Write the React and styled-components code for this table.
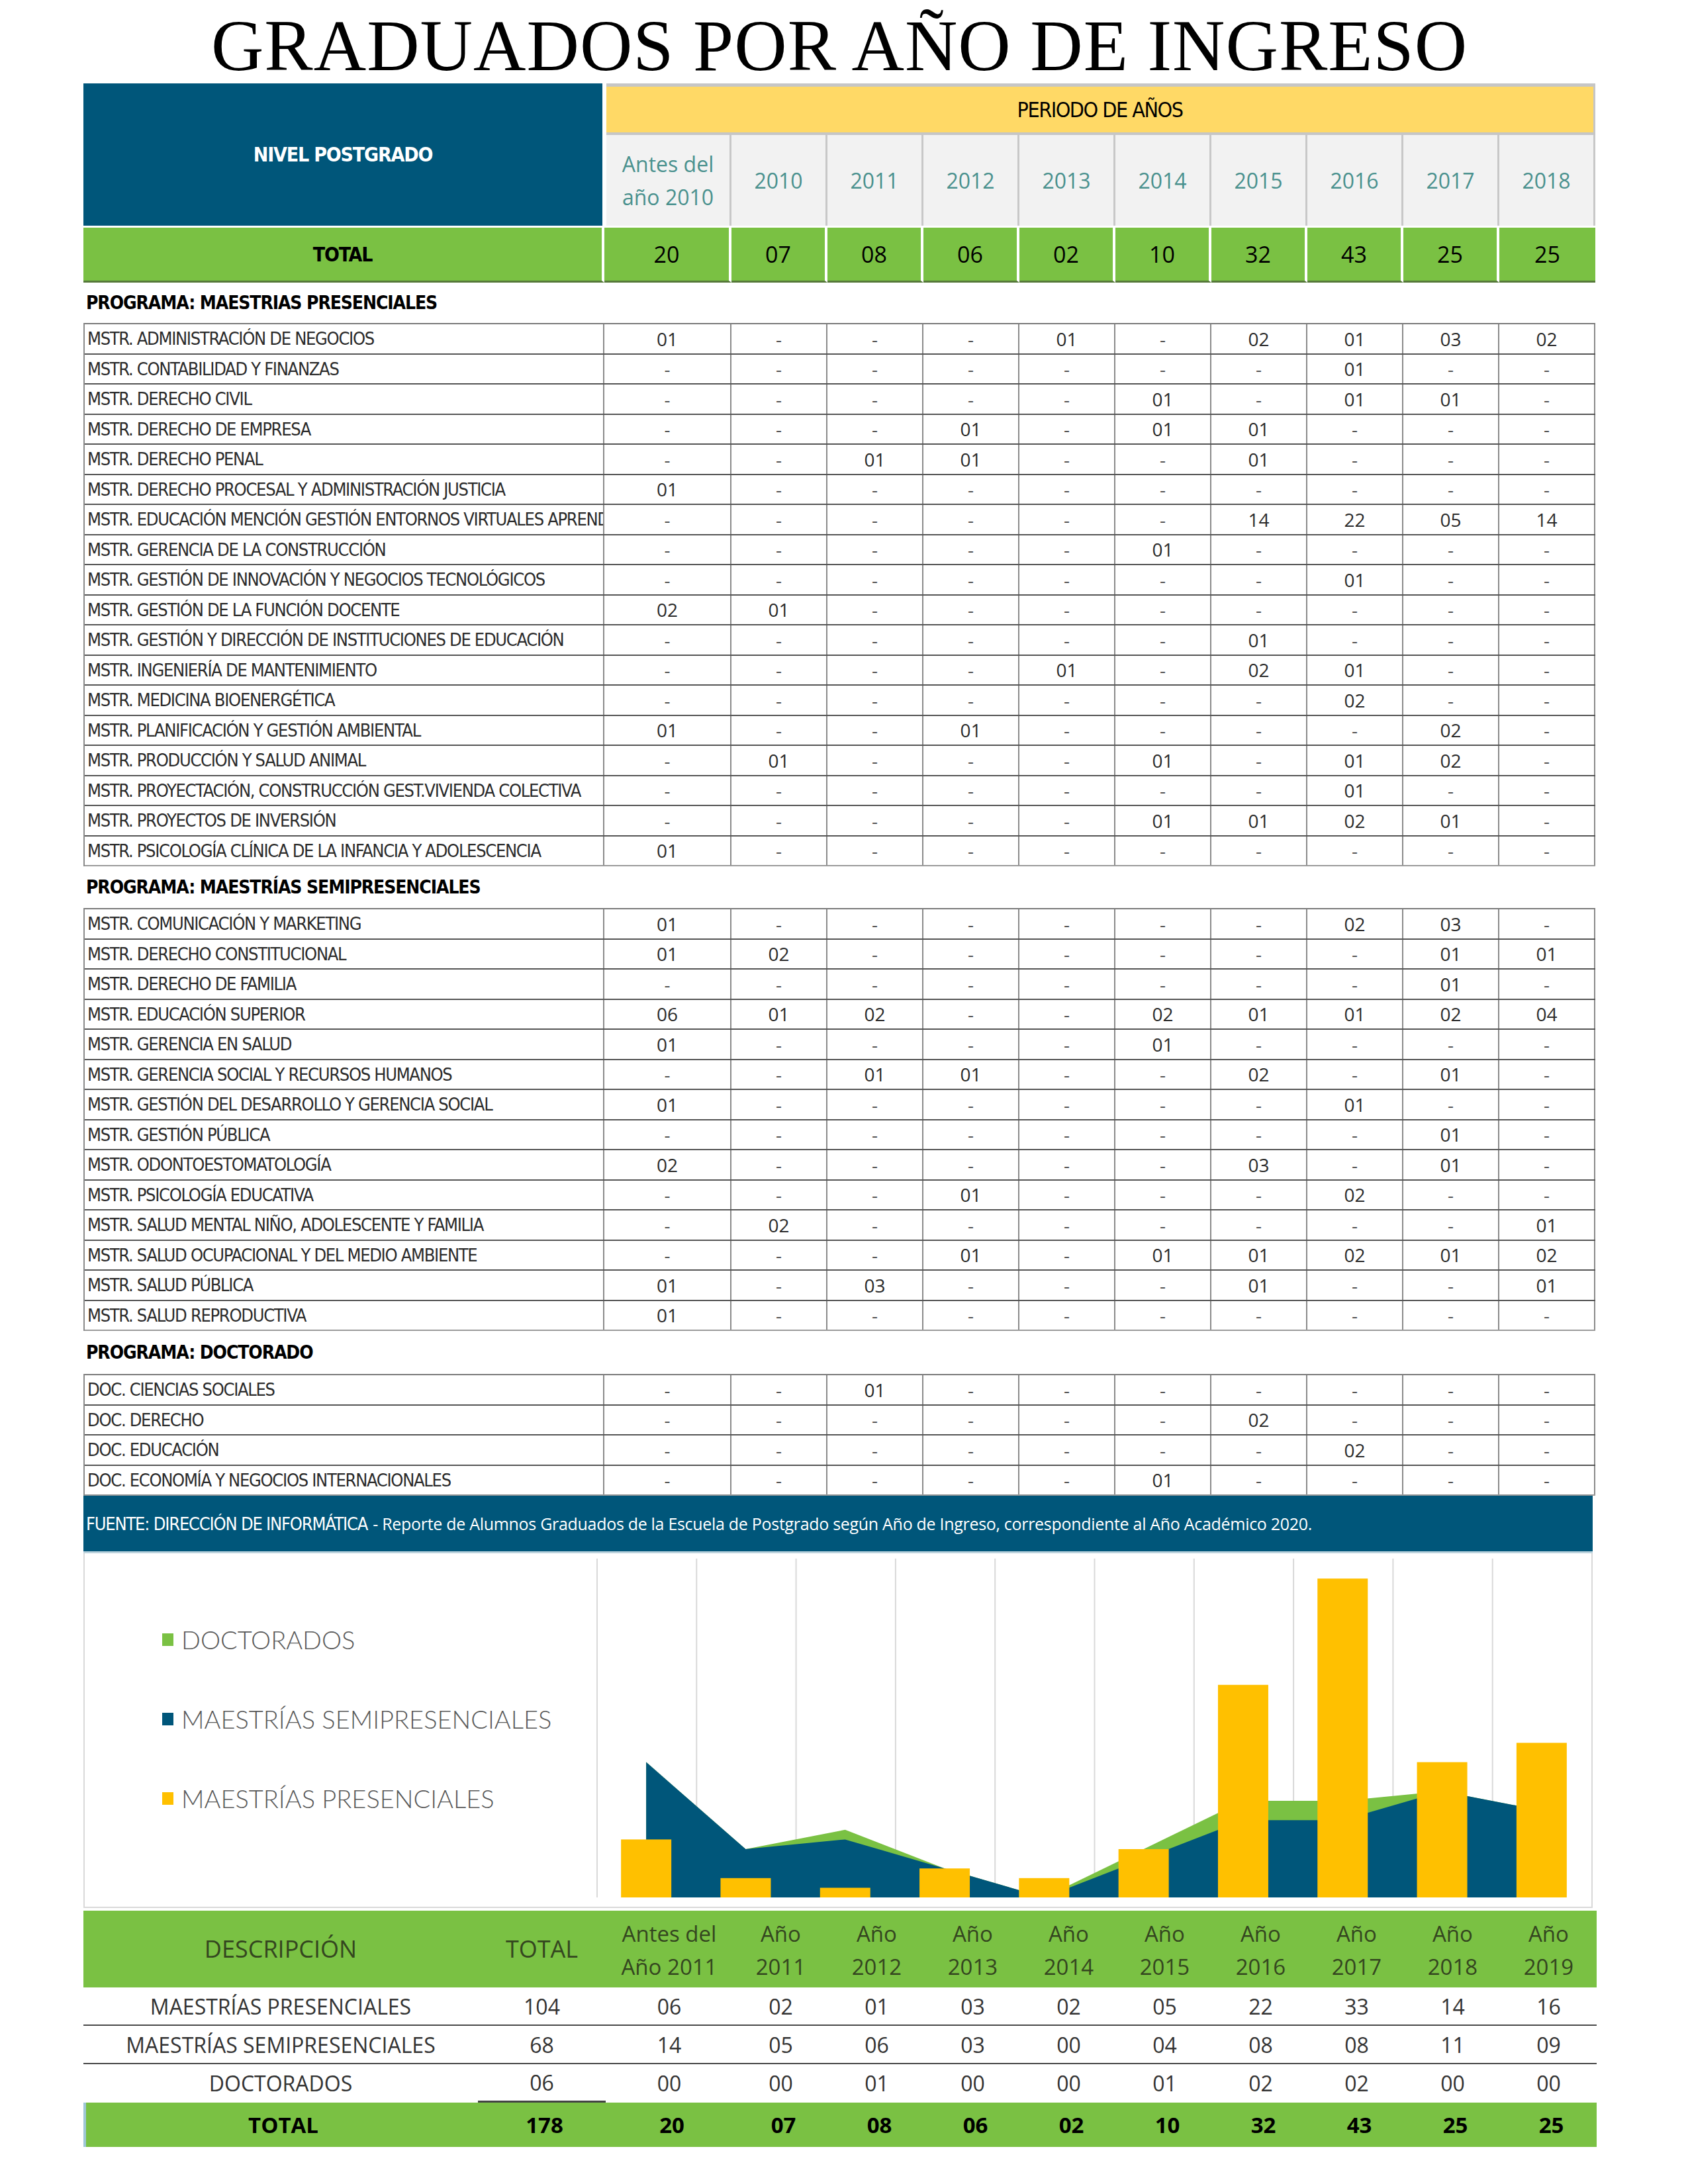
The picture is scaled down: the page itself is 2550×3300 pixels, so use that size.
import React from 'react';
import styled, { createGlobalStyle } from 'styled-components';

const COLS = '787px 192px repeat(9, 145px)';
const SUM_COLS = '596px 193px 192px repeat(9, 145px)';
const NARROW = '"DejaVu Sans Condensed", "Liberation Sans", sans-serif';
const BODY = '"Open Sans", "Liberation Sans", sans-serif';

const teal = '#00567a';
const green = '#7ac143';
const yellow = '#ffd966';
const gold = '#ffc000';

const GlobalStyle = createGlobalStyle`
  body {
    margin: 0;
    background: #fff;
    font-family: ${BODY};
  }
`;

const Page = styled.div`
  width: 2550px;
  padding-left: 126px;
  box-sizing: border-box;
`;

const Title = styled.h1`
  margin: 0;
  height: 126px;
  padding-top: 14px;
  box-sizing: border-box;
  font-family: "Liberation Serif", serif;
  font-weight: 400;
  font-size: 110px;
  line-height: 110px;
  text-align: center;
  width: 2284px;
  color: #000;
  letter-spacing: 1px;
  white-space: nowrap;
`;

const HeadTop = styled.div`
  display: grid;
  grid-template-columns: 787px 1fr;
  width: 2284px;
  height: 215px;
`;

const Nivel = styled.div`
  background: ${teal};
  color: #fff;
  display: flex;
  align-items: center;
  justify-content: center;
  font-family: ${NARROW};
  font-weight: 700;
  font-size: 30px;
  letter-spacing: -1.2px;
  margin-right: 3px;
`;

const PeriodCol = styled.div`
  display: flex;
  flex-direction: column;
  padding-left: 3px;
`;

const PeriodBand = styled.div`
  height: 78px;
  box-sizing: border-box;
  background: ${yellow};
  border-top: 5px solid #c6c6c6;
  border-bottom: 4px solid #c6c6c6;
  border-right: 3px solid #c6c6c6;
  display: flex;
  align-items: center;
  justify-content: center;
  font-family: ${NARROW};
  font-size: 32px;
  letter-spacing: -1.5px;
  color: #000;
`;

const YearRow = styled.div`
  flex: 1;
  display: grid;
  grid-template-columns: 189px repeat(9, 145px);
  background: #f2f2f2;
`;

const YearCell = styled.div`
  display: flex;
  align-items: center;
  justify-content: center;
  text-align: center;
  color: #4a918e;
  font-size: 32px;
  line-height: 50px;
  border-right: 3px solid #c8c8c8;
`;

const TotalRow = styled.div`
  display: grid;
  grid-template-columns: ${COLS};
  width: 2284px;
  height: 86px;
  box-sizing: border-box;
  border-top: 3px solid #fff;
`;

const TotalCell = styled.div`
  background: ${green};
  border-right: 4px solid #fff;
  border-bottom: 3px solid #56793a;
  display: flex;
  align-items: center;
  justify-content: center;
  color: #000;
  font-family: ${p => (p.$label ? NARROW : BODY)};
  font-weight: 700;
  font-weight: ${p => (p.$label ? 700 : 400)};
  font-size: ${p => (p.$label ? '30px' : '34px')};
  letter-spacing: ${p => (p.$label ? '-1.2px' : '0')};
  &:last-child {
    border-right: none;
  }
`;

const SectionTitle = styled.div`
  height: ${p => p.$h}px;
  display: flex;
  align-items: center;
  padding-left: 4px;
  font-family: ${NARROW};
  font-weight: 700;
  font-size: 28px;
  letter-spacing: -1.1px;
  color: #000;
`;

const DataTable = styled.div`
  width: 2284px;
  border-top: 2px solid #7a7a7a;
  border-left: 2px solid #8a8a8a;
  box-sizing: border-box;
`;

const DataRow = styled.div`
  display: grid;
  grid-template-columns: 785px 192px repeat(9, 145px);
  height: 45.5px;
  box-sizing: border-box;
  border-bottom: 2px solid #555;
  &:last-child {
    border-bottom-color: #9a9a9a;
  }
`;

const LabelCell = styled.div`
  display: flex;
  align-items: center;
  padding-left: 4px;
  overflow: hidden;
  white-space: nowrap;
  font-family: ${NARROW};
  font-size: 27px;
  letter-spacing: -1.3px;
  color: #2b2b2b;
  border-right: 2px solid #8a8a8a;
`;

const NumCell = styled.div`
  display: flex;
  align-items: center;
  justify-content: center;
  font-size: 28px;
  color: ${p => (p.$dash ? '#555' : '#2b2b2b')};
  border-right: 2px solid #8a8a8a;
`;

const SourceBar = styled.div`
  width: 2280px;
  height: 87px;
  box-sizing: border-box;
  background: ${teal};
  border-bottom: 3px solid #bcd3dd;
  display: flex;
  align-items: center;
  padding-left: 4px;
  color: #fff;
  font-size: 25px;
  white-space: nowrap;
  letter-spacing: -0.3px;
`;

const SourceLead = styled.span`
  font-family: ${NARROW};
  font-size: 27px;
  letter-spacing: -1.2px;
  margin-right: 8px;
`;

const ChartBox = styled.div`
  width: 2280px;
  height: 536px;
  box-sizing: border-box;
  display: flex;
  border: 2px solid #d9d9d9;
  border-top: none;
`;

const Legend = styled.div`
  width: 773px;
  display: flex;
  flex-direction: column;
  gap: 70px;
  padding: 105px 0 0 117px;
  box-sizing: border-box;
`;

const LegendItem = styled.div`
  height: 50px;
  display: flex;
  align-items: center;
  gap: 12px;
  font-family: Lato, "Liberation Sans", sans-serif;
  font-weight: 300;
  font-size: 38px;
  color: #595959;
`;

const Swatch = styled.span`
  width: 17px;
  height: 19px;
  background: ${p => p.$color};
`;

const SumHead = styled.div`
  margin-top: 4px;
  width: 2286px;
  height: 116px;
  display: grid;
  grid-template-columns: ${SUM_COLS};
  background: ${green};
  color: #34461f;
`;

const SumHeadCell = styled.div`
  display: flex;
  align-items: center;
  justify-content: center;
  text-align: center;
  font-size: ${p => (p.$big ? '36px' : '33px')};
  line-height: 50px;
  padding-top: ${p => (p.$big ? '0' : '4px')};
`;

const SumRow = styled.div`
  width: 2286px;
  height: 58px;
  box-sizing: border-box;
  display: grid;
  grid-template-columns: ${SUM_COLS};
  border-bottom: 2px solid ${p => (p.$line ? '#4a4a4a' : 'transparent')};
  color: #333;
`;

const SumCell = styled.div`
  display: flex;
  align-items: center;
  justify-content: center;
  font-size: 32px;
  box-sizing: border-box;
  border-bottom: ${p => (p.$under ? '3px solid #444' : 'none')};
  margin-bottom: ${p => (p.$under ? '-2px' : '0')};
`;

const SumTotal = styled.div`
  width: 2286px;
  height: 67px;
  display: grid;
  grid-template-columns: ${SUM_COLS};
  background: ${green};
  border-left: 4px solid #9fc7d6;
  box-sizing: border-box;
  color: #000;
`;

const SumTotalCell = styled.div`
  display: flex;
  align-items: center;
  justify-content: center;
  font-size: 33px;
  font-weight: 700;
`;

const presenciales = [
  ['MSTR. ADMINISTRACIÓN DE NEGOCIOS', '01 - - - 01 - 02 01 03 02'],
  ['MSTR. CONTABILIDAD Y FINANZAS', '- - - - - - - 01 - -'],
  ['MSTR. DERECHO CIVIL', '- - - - - 01 - 01 01 -'],
  ['MSTR. DERECHO DE EMPRESA', '- - - 01 - 01 01 - - -'],
  ['MSTR. DERECHO PENAL', '- - 01 01 - - 01 - - -'],
  ['MSTR. DERECHO PROCESAL Y ADMINISTRACIÓN JUSTICIA', '01 - - - - - - - - -'],
  ['MSTR. EDUCACIÓN MENCIÓN GESTIÓN ENTORNOS VIRTUALES APRENDIZAJE', '- - - - - - 14 22 05 14'],
  ['MSTR. GERENCIA DE LA CONSTRUCCIÓN', '- - - - - 01 - - - -'],
  ['MSTR. GESTIÓN DE INNOVACIÓN Y NEGOCIOS TECNOLÓGICOS', '- - - - - - - 01 - -'],
  ['MSTR. GESTIÓN DE LA FUNCIÓN DOCENTE', '02 01 - - - - - - - -'],
  ['MSTR. GESTIÓN Y DIRECCIÓN DE INSTITUCIONES DE EDUCACIÓN', '- - - - - - 01 - - -'],
  ['MSTR. INGENIERÍA DE MANTENIMIENTO', '- - - - 01 - 02 01 - -'],
  ['MSTR. MEDICINA BIOENERGÉTICA', '- - - - - - - 02 - -'],
  ['MSTR. PLANIFICACIÓN Y GESTIÓN AMBIENTAL', '01 - - 01 - - - - 02 -'],
  ['MSTR. PRODUCCIÓN Y SALUD ANIMAL', '- 01 - - - 01 - 01 02 -'],
  ['MSTR. PROYECTACIÓN, CONSTRUCCIÓN GEST.VIVIENDA COLECTIVA', '- - - - - - - 01 - -'],
  ['MSTR. PROYECTOS DE INVERSIÓN', '- - - - - 01 01 02 01 -'],
  ['MSTR. PSICOLOGÍA CLÍNICA DE LA INFANCIA Y ADOLESCENCIA', '01 - - - - - - - - -'],
];

const semipresenciales = [
  ['MSTR. COMUNICACIÓN Y MARKETING', '01 - - - - - - 02 03 -'],
  ['MSTR. DERECHO CONSTITUCIONAL', '01 02 - - - - - - 01 01'],
  ['MSTR. DERECHO DE FAMILIA', '- - - - - - - - 01 -'],
  ['MSTR. EDUCACIÓN SUPERIOR', '06 01 02 - - 02 01 01 02 04'],
  ['MSTR. GERENCIA EN SALUD', '01 - - - - 01 - - - -'],
  ['MSTR. GERENCIA SOCIAL Y RECURSOS HUMANOS', '- - 01 01 - - 02 - 01 -'],
  ['MSTR. GESTIÓN DEL DESARROLLO Y GERENCIA SOCIAL', '01 - - - - - - 01 - -'],
  ['MSTR. GESTIÓN PÚBLICA', '- - - - - - - - 01 -'],
  ['MSTR. ODONTOESTOMATOLOGÍA', '02 - - - - - 03 - 01 -'],
  ['MSTR. PSICOLOGÍA EDUCATIVA', '- - - 01 - - - 02 - -'],
  ['MSTR. SALUD MENTAL NIÑO, ADOLESCENTE Y FAMILIA', '- 02 - - - - - - - 01'],
  ['MSTR. SALUD OCUPACIONAL Y DEL MEDIO AMBIENTE', '- - - 01 - 01 01 02 01 02'],
  ['MSTR. SALUD PÚBLICA', '01 - 03 - - - 01 - - 01'],
  ['MSTR. SALUD REPRODUCTIVA', '01 - - - - - - - - -'],
];

const doctorado = [
  ['DOC. CIENCIAS SOCIALES', '- - 01 - - - - - - -'],
  ['DOC. DERECHO', '- - - - - - 02 - - -'],
  ['DOC. EDUCACIÓN', '- - - - - - - 02 - -'],
  ['DOC. ECONOMÍA Y NEGOCIOS INTERNACIONALES', '- - - - - 01 - - - -'],
];

const sections = [
  { title: 'PROGRAMA: MAESTRIAS PRESENCIALES', gap: 61, rows: presenciales },
  { title: 'PROGRAMA: MAESTRÍAS SEMIPRESENCIALES', gap: 63, rows: semipresenciales },
  { title: 'PROGRAMA: DOCTORADO', gap: 65, rows: doctorado },
];

const topTotals = ['20', '07', '08', '06', '02', '10', '32', '43', '25', '25'];

const summary = [
  ['MAESTRÍAS PRESENCIALES', '104', [6, 2, 1, 3, 2, 5, 22, 33, 14, 16]],
  ['MAESTRÍAS SEMIPRESENCIALES', '68', [14, 5, 6, 3, 0, 4, 8, 8, 11, 9]],
  ['DOCTORADOS', '06', [0, 0, 1, 0, 0, 1, 2, 2, 0, 0]],
];

const pad = n => String(n).padStart(2, '0');

function AreaChart() {
  const w = 1503;
  const base = 520;
  const unit = 14.6;
  const step = w / 10;
  const [pres, semi, doc] = summary.map(s => s[2]);
  const cx = i => (i + 0.5) * step;
  const line = vals => vals.map((v, i) => `${cx(i)},${base - v * unit}`).join(' ');
  const close = `${cx(9)},${base} ${cx(0)},${base}`;
  return (
    <svg width={w} height="534" viewBox={`0 0 ${w} 534`}>
      {Array.from({ length: 10 }, (_, i) => (
        <line key={i} x1={i * step + 1} x2={i * step + 1} y1="8" y2={base} stroke="#d9d9d9" strokeWidth="2" />
      ))}
      <polygon points={`${line(semi.map((v, i) => v + doc[i]))} ${close}`} fill={green} />
      <polygon points={`${line(semi)} ${close}`} fill={teal} />
      {pres.map((v, i) => (
        <rect key={i} x={cx(i) - 38} y={base - v * unit} width="76" height={v * unit} fill={gold} />
      ))}
    </svg>
  );
}

export default function App() {
  return (
    <Page>
      <GlobalStyle />
      <Title>GRADUADOS POR AÑO DE INGRESO</Title>

      <HeadTop>
        <Nivel>NIVEL POSTGRADO</Nivel>
        <PeriodCol>
          <PeriodBand>PERIODO DE AÑOS</PeriodBand>
          <YearRow>
            <YearCell>Antes del<br />año 2010</YearCell>
            {['2010', '2011', '2012', '2013', '2014', '2015', '2016', '2017', '2018'].map(y => (
              <YearCell key={y}>{y}</YearCell>
            ))}
          </YearRow>
        </PeriodCol>
      </HeadTop>
      <TotalRow>
        <TotalCell $label>TOTAL</TotalCell>
        {topTotals.map((t, i) => (
          <TotalCell key={i}>{t}</TotalCell>
        ))}
      </TotalRow>

      {sections.map(sec => (
        <React.Fragment key={sec.title}>
          <SectionTitle $h={sec.gap}>{sec.title}</SectionTitle>
          <DataTable>
            {sec.rows.map(([name, vals]) => (
              <DataRow key={name}>
                <LabelCell>{name}</LabelCell>
                {vals.split(' ').map((v, i) => (
                  <NumCell key={i} $dash={v === '-'}>{v}</NumCell>
                ))}
              </DataRow>
            ))}
          </DataTable>
        </React.Fragment>
      ))}

      <SourceBar>
        <SourceLead>FUENTE: DIRECCIÓN DE INFORMÁTICA</SourceLead>
        - Reporte de Alumnos Graduados de la Escuela de Postgrado según Año de Ingreso, correspondiente al Año Académico 2020.
      </SourceBar>

      <ChartBox>
        <Legend>
          <LegendItem><Swatch $color={green} />DOCTORADOS</LegendItem>
          <LegendItem><Swatch $color={teal} />MAESTRÍAS SEMIPRESENCIALES</LegendItem>
          <LegendItem><Swatch $color={gold} />MAESTRÍAS PRESENCIALES</LegendItem>
        </Legend>
        <AreaChart />
      </ChartBox>

      <SumHead>
        <SumHeadCell $big>DESCRIPCIÓN</SumHeadCell>
        <SumHeadCell $big>TOTAL</SumHeadCell>
        <SumHeadCell>Antes del<br />Año 2011</SumHeadCell>
        {['2011', '2012', '2013', '2014', '2015', '2016', '2017', '2018', '2019'].map(y => (
          <SumHeadCell key={y}>Año<br />{y}</SumHeadCell>
        ))}
      </SumHead>
      {summary.map(([name, total, vals], r) => (
        <SumRow key={name} $line={r < 2}>
          <SumCell>{name}</SumCell>
          <SumCell $under={r === 2}>{total}</SumCell>
          {vals.map((v, i) => (
            <SumCell key={i}>{pad(v)}</SumCell>
          ))}
        </SumRow>
      ))}
      <SumTotal>
        <SumTotalCell>TOTAL</SumTotalCell>
        <SumTotalCell>178</SumTotalCell>
        {topTotals.map((t, i) => (
          <SumTotalCell key={i}>{t}</SumTotalCell>
        ))}
      </SumTotal>
    </Page>
  );
}
